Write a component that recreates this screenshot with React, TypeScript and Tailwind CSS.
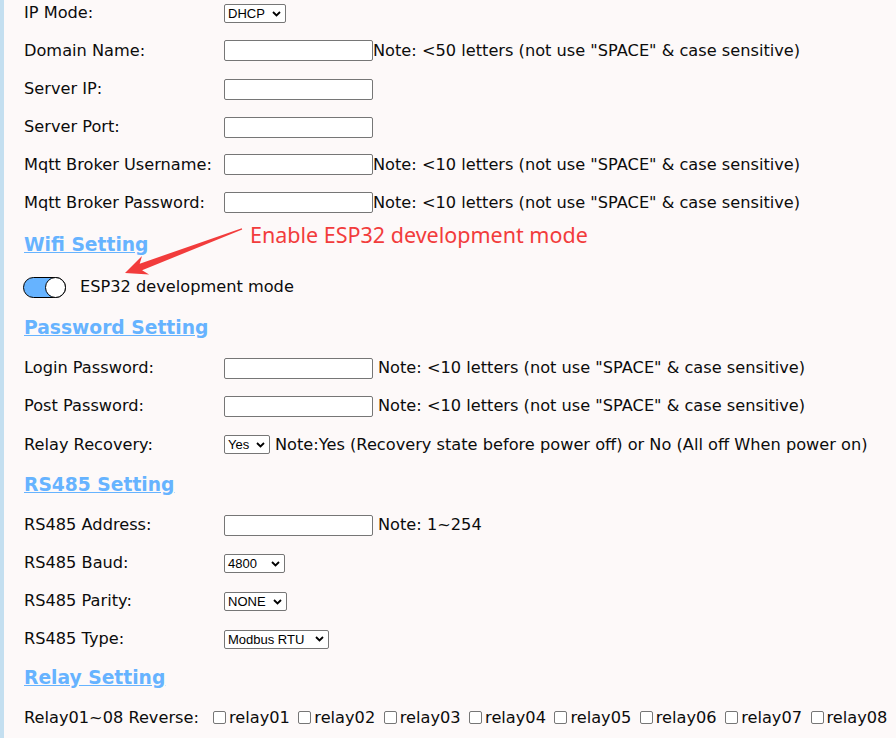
import React from "react";

const Input = () => (
  <span className="inline-block w-[149px] h-[21px] border border-[#767676] rounded-[2px] bg-white shrink-0" />
);

function Select({ label, w }: { label: string; w: string }) {
  return (
    <span
      className={`inline-flex items-center justify-between h-[19px] border border-[#767676] rounded-[2px] bg-white pl-[3px] pr-[4px] font-['Liberation_Sans',Arial,sans-serif] text-[13px] leading-none text-black shrink-0 ${w}`}
    >
      <span>{label}</span>
      <svg width="9" height="6" viewBox="0 0 9 6" className="shrink-0">
        <path d="M1 1l3.5 3.5L8 1" fill="none" stroke="#000" strokeWidth="1.8" />
      </svg>
    </span>
  );
}

function Row({ label, h, children }: { label: string; h: string; children?: React.ReactNode }) {
  return (
    <div className={`flex items-center ${h}`}>
      <div className="w-[200px] shrink-0 whitespace-nowrap">{label}</div>
      <div className="flex items-center whitespace-nowrap">{children}</div>
    </div>
  );
}

function Heading({ text, h }: { text: string; h: string }) {
  return (
    <div className={`flex items-center ${h}`}>
      <a className="font-['DejaVu_Sans',sans-serif] font-bold text-[18.7px] text-[#66b3ff] underline decoration-[#66b3ff] leading-none">
        {text}
      </a>
    </div>
  );
}

const relays = ["relay01", "relay02", "relay03", "relay04", "relay05", "relay06", "relay07", "relay08"];

export default function App() {
  return (
    <div className="relative w-[896px] h-[738px] overflow-hidden bg-[#fdf9f9] border-l-4 border-[#c4dff0] font-['DejaVu_Sans',sans-serif] text-[16.2px] text-[#0c0c0c]">
      <div className="pl-[20px] mt-[-5px]">
        <Row label="IP Mode:" h="h-[37px]">
          <Select label="DHCP" w="w-[62px]" />
        </Row>
        <Row label="Domain Name:" h="h-[38px]">
          <Input />
          <span>Note: &lt;50 letters (not use "SPACE" &amp; case sensitive)</span>
        </Row>
        <Row label="Server IP:" h="h-[38px]">
          <Input />
        </Row>
        <Row label="Server Port:" h="h-[38px]">
          <Input />
        </Row>
        <Row label="Mqtt Broker Username:" h="h-[38px]">
          <Input />
          <span>Note: &lt;10 letters (not use "SPACE" &amp; case sensitive)</span>
        </Row>
        <Row label="Mqtt Broker Password:" h="h-[38px]">
          <Input />
          <span>Note: &lt;10 letters (not use "SPACE" &amp; case sensitive)</span>
        </Row>

        <Heading text="Wifi Setting" h="h-[46px]" />
        <div className="flex items-center h-[38px]">
          <span className="relative inline-block w-[43px] h-[21px] ml-[-1px] rounded-full border border-black bg-[#66b3ff] shrink-0">
            <span className="absolute right-[-1px] top-[-1px] w-[21px] h-[21px] rounded-full border border-black bg-white" />
          </span>
          <span className="ml-[14px]">ESP32 development mode</span>
        </div>

        <Heading text="Password Setting" h="h-[44px]" />
        <Row label="Login Password:" h="h-[37px]">
          <Input />
          <span className="ml-[5px]">Note: &lt;10 letters (not use "SPACE" &amp; case sensitive)</span>
        </Row>
        <Row label="Post Password:" h="h-[39px]">
          <Input />
          <span className="ml-[5px]">Note: &lt;10 letters (not use "SPACE" &amp; case sensitive)</span>
        </Row>
        <Row label="Relay Recovery:" h="h-[38px]">
          <Select label="Yes" w="w-[46px]" />
          <span className="ml-[5px]">Note:Yes (Recovery state before power off) or No (All off When power on)</span>
        </Row>

        <Heading text="RS485 Setting" h="h-[43px]" />
        <Row label="RS485 Address:" h="h-[37px]">
          <Input />
          <span className="ml-[5px]">Note: 1~254</span>
        </Row>
        <Row label="RS485 Baud:" h="h-[39px]">
          <Select label="4800" w="w-[61px]" />
        </Row>
        <Row label="RS485 Parity:" h="h-[37px]">
          <Select label="NONE" w="w-[63px]" />
        </Row>
        <Row label="RS485 Type:" h="h-[38px]">
          <Select label="Modbus RTU" w="w-[105px]" />
        </Row>

        <Heading text="Relay Setting" h="h-[41px]" />
        <div className="flex items-center h-[38px] whitespace-nowrap">
          <span className="w-[185px] shrink-0">Relay01~08 Reverse:</span>
          {relays.map((r) => (
            <span key={r} className="flex items-center mr-[4.5px]">
              <span className="inline-block w-[13px] h-[13px] ml-[4px] mr-[3px] border border-[#767676] rounded-[2px] bg-white" />
              <span>{r}</span>
            </span>
          ))}
        </div>
      </div>

      <span className="absolute left-[246px] top-[221px] font-['Noto_Sans',sans-serif] text-[21.5px] leading-[28px] text-[#f23c3c] whitespace-nowrap">
        Enable ESP32 development mode
      </span>
      <svg className="absolute left-[-4px] top-0 pointer-events-none" width="896" height="738" viewBox="0 0 896 738">
        <polygon
          points="125,273 142,255.9 139.7,263.7 241.8,228.2 242.2,229.4 142.1,270.3 149.1,274.6"
          fill="#f23c3c"
        />
      </svg>
    </div>
  );
}
